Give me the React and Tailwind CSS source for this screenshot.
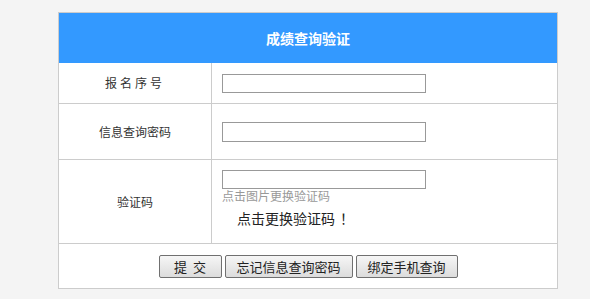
export default function App() {
  const font = { fontFamily: '"Noto Sans CJK SC", "Noto Sans", sans-serif' };
  const btn =
    "h-[23px] border border-[#707070] rounded-[2px] bg-gradient-to-b from-[#f6f6f6] to-[#dcdcdc] text-[13px] leading-[21px] text-[#222] whitespace-nowrap px-0";
  return (
    <div className="w-[590px] h-[299px] bg-[#f4f4f4] pt-[12px] pl-[58px]" style={font}>
      <div className="w-[500px] border border-[#cccccc] bg-white">
        <div className="h-[50px] bg-[#3399ff] flex items-center justify-center text-white font-bold text-[14px]">
          成绩查询验证
        </div>
        <div className="flex h-[41px] border-b border-[#cccccc]">
          <div className="w-[153px] border-r border-[#cccccc] flex items-center justify-center text-[12px] text-[#333] tracking-[3px]">
            报名序号
          </div>
          <div className="flex-1 flex items-center pl-[10px]">
            <input className="w-[204px] h-[19px] border border-[#999]" />
          </div>
        </div>
        <div className="flex h-[56px] border-b border-[#cccccc]">
          <div className="w-[153px] border-r border-[#cccccc] flex items-center justify-center text-[12px] text-[#333]">
            信息查询密码
          </div>
          <div className="flex-1 flex items-center pl-[10px]">
            <input className="w-[204px] h-[20px] border border-[#999]" />
          </div>
        </div>
        <div className="flex h-[84px] border-b border-[#cccccc]">
          <div className="w-[153px] border-r border-[#cccccc] flex items-center justify-center text-[12px] text-[#333]">
            验证码
          </div>
          <div className="flex-1 flex flex-col pl-[10px] pt-[10px]">
            <input className="w-[204px] h-[19px] border border-[#999]" />
            <div className="text-[12px] leading-[14px] text-[#999]">点击图片更换验证码</div>
            <div className="ml-[15px] mt-[6px] text-[14px] leading-[18px] text-[#222]">
              点击更换验证码<span className="ml-[5px]">！</span>
            </div>
          </div>
        </div>
        <div className="h-[44px] flex items-center justify-center gap-[3px]">
          <button className={btn + " w-[63px]"}>提&nbsp;&nbsp;交</button>
          <button className={btn + " w-[128px]"}>忘记信息查询密码</button>
          <button className={btn + " w-[102px]"}>绑定手机查询</button>
        </div>
      </div>
    </div>
  );
}
